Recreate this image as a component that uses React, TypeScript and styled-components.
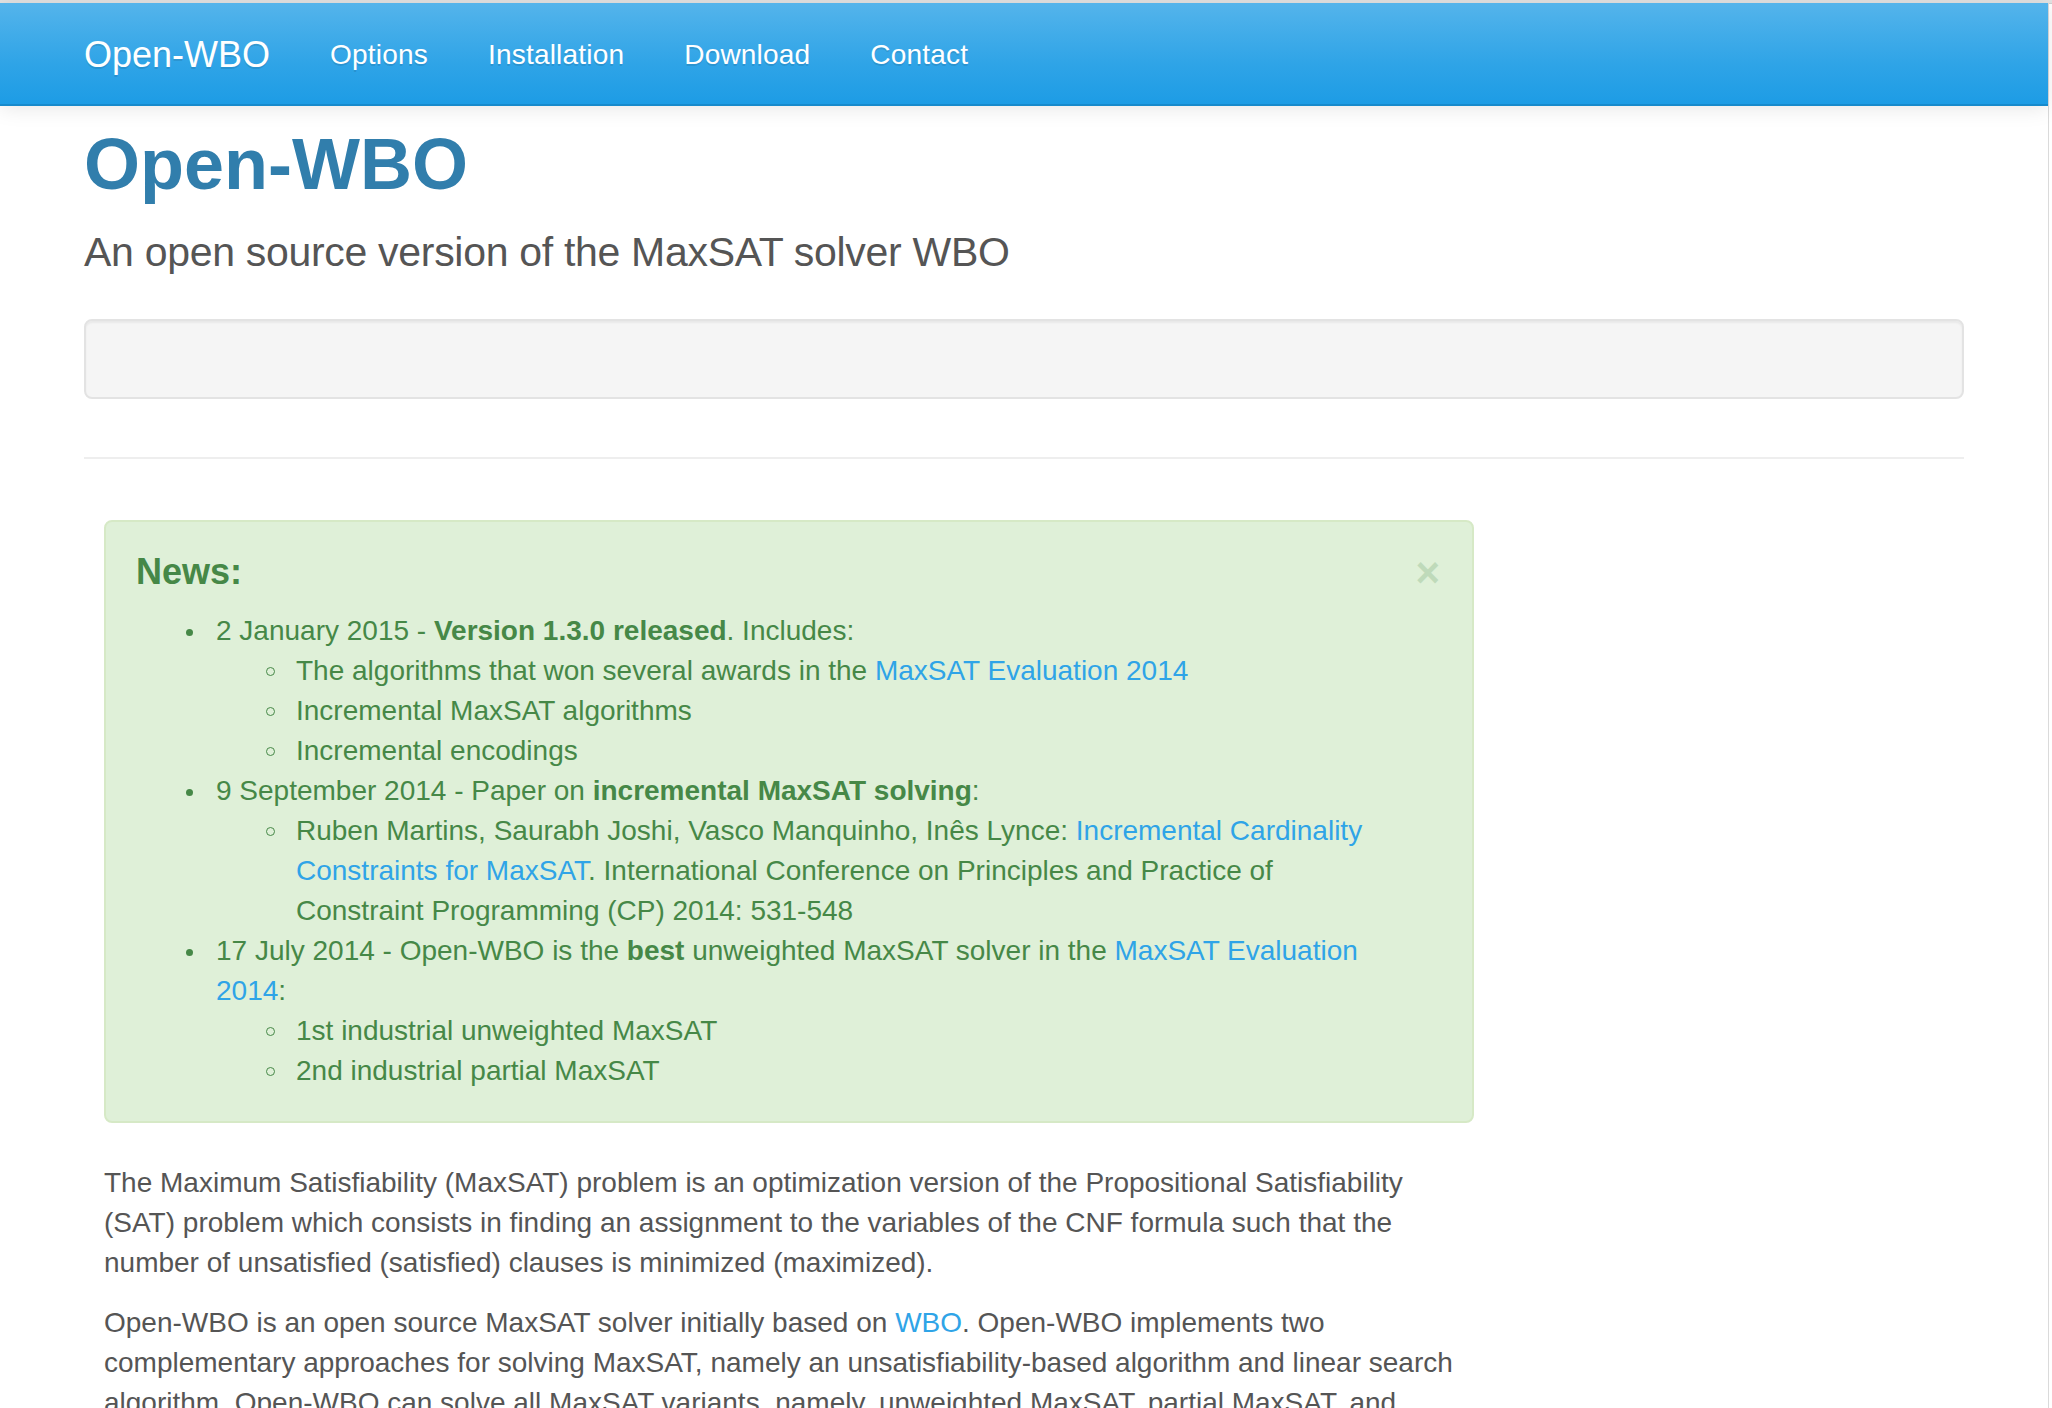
import React from "react";
import styled, { createGlobalStyle } from "styled-components";

const GlobalStyle = createGlobalStyle`
  html, body {
    margin: 0;
    padding: 0;
    background: #ffffff;
  }
  body {
    font-family: "Liberation Sans", Arial, sans-serif;
    font-size: 28px;
    line-height: 40px;
    color: #555555;
  }
  * { box-sizing: border-box; }
`;

const TopEdge = styled.div`
  height: 4px;
  background: #e2e2e2;
  border-bottom: 1px solid #cfcfcf;
`;

const Page = styled.div`
  width: 2048px;
  min-height: 1404px;
  background: #ffffff;
  box-shadow: 1px 0 0 #dadada;
`;

const Navbar = styled.nav`
  height: 103px;
  background-image: linear-gradient(#54b4eb, #2fa4e7 60%, #1d9ce5);
  border-bottom: 2px solid #178acc;
  box-shadow: 0 2px 20px rgba(0, 0, 0, 0.1);
  margin-top: -1px;
`;

const NavInner = styled.div`
  max-width: 1940px;
  margin: 0 auto;
  padding: 0 30px;
  display: flex;
  align-items: flex-start;
`;

const Brand = styled.a`
  display: block;
  margin-left: -30px;
  padding: 32px 30px 28px;
  font-size: 36px;
  line-height: 40px;
  color: #ffffff;
  text-decoration: none;
  text-shadow: 0 2px 0 rgba(0, 0, 0, 0.1);
`;

const NavList = styled.ul`
  display: flex;
  list-style: none;
  margin: 0;
  padding: 0;
`;

const NavLink = styled.a`
  display: block;
  padding: 32px 30px 28px;
  font-size: 28px;
  line-height: 40px;
  letter-spacing: 0.2px;
  color: #ffffff;
  text-decoration: none;
  text-shadow: 0 2px 0 rgba(0, 0, 0, 0.1);
`;

const Container = styled.main`
  max-width: 1940px;
  margin: 0 auto;
  padding: 19px 30px 0;
`;

const Title = styled.h1`
  margin: 0 0 19px;
  font-size: 72px;
  line-height: 79px;
  font-weight: 700;
  color: #317eac;
`;

const Lead = styled.p`
  margin: 0 0 38px;
  font-size: 41px;
  line-height: 58px;
  font-weight: 300;
  letter-spacing: -0.3px;
  color: #555555;
`;

const Well = styled.div`
  height: 80px;
  background: #f5f5f5;
  border: 2px solid #e3e3e3;
  border-radius: 8px;
  box-shadow: inset 0 2px 2px rgba(0, 0, 0, 0.05);
`;

const Rule = styled.hr`
  margin: 58px 0 61px;
  border: 0;
  border-top: 2px solid #eeeeee;
`;

const Column = styled.section`
  width: 1370px;
  margin-left: 20px;
`;

const Alert = styled.div`
  padding: 30px 32px 30px 30px;
  margin-bottom: 40px;
  background: #dff0d8;
  border: 2px solid #d6e9c6;
  border-radius: 8px;
  color: #468847;
`;

const AlertHeader = styled.div`
  display: flex;
  justify-content: space-between;
  align-items: flex-start;
`;

const AlertTitle = styled.h4`
  margin: 0 0 19px;
  font-size: 36px;
  line-height: 40px;
  font-weight: 700;
  color: #468847;
`;

const CloseButton = styled.button`
  border: 0;
  background: transparent;
  padding: 0;
  margin: 0;
  font-family: "Liberation Sans", Arial, sans-serif;
  font-size: 42px;
  line-height: 42px;
  font-weight: 700;
  color: #468847;
  opacity: 0.2;
  cursor: pointer;
`;

const NewsList = styled.ul<{ $nested?: boolean }>`
  margin: 0;
  padding: 0 ${(p) => (p.$nested ? "0" : "38px")} 0 50px;
  list-style: none;
`;

const Item = styled.li`
  display: flex;
  align-items: flex-start;
  font-size: 28px;
  line-height: 40px;
`;

const Marker = styled.span`
  flex: none;
  width: 30px;
  height: 40px;
  display: flex;
  align-items: flex-start;
`;

const Dot = styled.span<{ $hollow?: boolean }>`
  display: block;
  width: ${(p) => (p.$hollow ? "9px" : "7px")};
  height: ${(p) => (p.$hollow ? "9px" : "7px")};
  margin-top: ${(p) => (p.$hollow ? "16px" : "18px")};
  border-radius: 50%;
  background: ${(p) => (p.$hollow ? "transparent" : "#468847")};
  border: ${(p) => (p.$hollow ? "1.5px solid #468847" : "0")};
`;

const ItemBody = styled.div`
  flex: 1;
  min-width: 0;
`;

const Link = styled.a`
  color: #2fa4e7;
  text-decoration: none;
`;

const Strong = styled.strong`
  font-weight: 700;
`;

const Paragraph = styled.p`
  margin: 0 0 20px;
  font-size: 28px;
  line-height: 40px;
  color: #555555;
`;

function NewsItem({ nested, children }: { nested?: boolean; children: React.ReactNode }) {
  return (
    <Item>
      <Marker>
        <Dot $hollow={nested} />
      </Marker>
      <ItemBody>{children}</ItemBody>
    </Item>
  );
}

export default function App() {
  return (
    <>
      <GlobalStyle />
      <TopEdge />
      <Page>
        <Navbar>
          <NavInner>
            <Brand href="#">Open-WBO</Brand>
            <NavList>
              <li><NavLink href="#">Options</NavLink></li>
              <li><NavLink href="#">Installation</NavLink></li>
              <li><NavLink href="#">Download</NavLink></li>
              <li><NavLink href="#">Contact</NavLink></li>
            </NavList>
          </NavInner>
        </Navbar>
        <Container>
          <Title>Open-WBO</Title>
          <Lead>An open source version of the MaxSAT solver WBO</Lead>
          <Well />
          <Rule />
          <Column>
            <Alert>
              <AlertHeader>
                <AlertTitle>News:</AlertTitle>
                <CloseButton aria-label="Close">×</CloseButton>
              </AlertHeader>
              <NewsList>
                <NewsItem>
                  2 January 2015 - <Strong>Version 1.3.0 released</Strong>. Includes:
                  <NewsList $nested>
                    <NewsItem nested>
                      The algorithms that won several awards in the{" "}
                      <Link href="#">MaxSAT Evaluation 2014</Link>
                    </NewsItem>
                    <NewsItem nested>Incremental MaxSAT algorithms</NewsItem>
                    <NewsItem nested>Incremental encodings</NewsItem>
                  </NewsList>
                </NewsItem>
                <NewsItem>
                  9 September 2014 - Paper on <Strong>incremental MaxSAT solving</Strong>:
                  <NewsList $nested>
                    <NewsItem nested>
                      Ruben Martins, Saurabh Joshi, Vasco Manquinho, Inês Lynce:{" "}
                      <Link href="#">Incremental Cardinality Constraints for MaxSAT</Link>.
                      International Conference on Principles and Practice of Constraint
                      Programming (CP) 2014: 531-548
                    </NewsItem>
                  </NewsList>
                </NewsItem>
                <NewsItem>
                  17 July 2014 - Open-WBO is the <Strong>best</Strong> unweighted MaxSAT
                  solver in the <Link href="#">MaxSAT Evaluation 2014</Link>:
                  <NewsList $nested>
                    <NewsItem nested>1st industrial unweighted MaxSAT</NewsItem>
                    <NewsItem nested>2nd industrial partial MaxSAT</NewsItem>
                  </NewsList>
                </NewsItem>
              </NewsList>
            </Alert>
            <Paragraph>
              The Maximum Satisfiability (MaxSAT) problem is an optimization version of the
              Propositional Satisfiability (SAT) problem which consists in finding an
              assignment to the variables of the CNF formula such that the number of
              unsatisfied (satisfied) clauses is minimized (maximized).
            </Paragraph>
            <Paragraph>
              Open-WBO is an open source MaxSAT solver initially based on{" "}
              <Link href="#">WBO</Link>. Open-WBO implements two complementary approaches
              for solving MaxSAT, namely an unsatisfiability-based algorithm and linear
              search algorithm. Open-WBO can solve all MaxSAT variants, namely, unweighted
              MaxSAT, partial MaxSAT, and weighted partial MaxSAT.
            </Paragraph>
          </Column>
        </Container>
      </Page>
    </>
  );
}
